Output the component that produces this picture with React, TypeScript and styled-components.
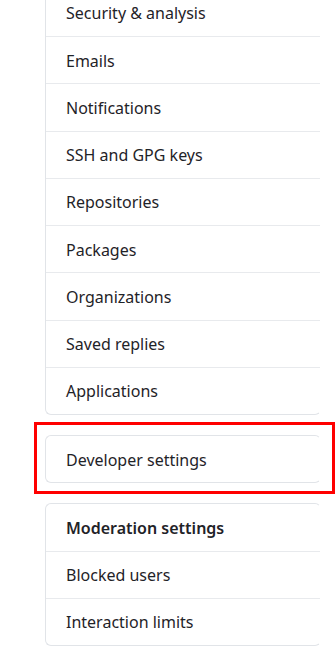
import React from "react";
import styled, { createGlobalStyle } from "styled-components";

const Global = createGlobalStyle`
  html, body { margin: 0; padding: 0; background: #ffffff; }
  body {
    font-family: "Noto Sans", "Open Sans", "Liberation Sans", sans-serif;
    color: #1f2328;
    overflow: hidden;
  }
`;

const Page = styled.div`
  width: 336px;
  height: 660px;
  overflow: hidden;
  padding-left: 45px;
  box-sizing: border-box;
`;

const Card = styled.nav<{ $offsetTop?: number }>`
  width: 276px;
  box-sizing: border-box;
  border: 1px solid #e1e4e8;
  border-right-color: transparent;
  border-radius: 6px;
  margin-top: ${(p) => (p.$offsetTop !== undefined ? `${p.$offsetTop}px` : "0")};
  display: flex;
  flex-direction: column;
`;

const Item = styled.a<{ $heading?: boolean }>`
  display: flex;
  align-items: center;
  height: 46.25px;
  padding: 1px 20px 0;
  box-sizing: border-box;
  font-size: 16px;
  font-weight: ${(p) => (p.$heading ? 600 : 400)};
  color: #1f2328;
  text-decoration: none;
  & + & {
    border-top: 1px solid #e8eaed;
    height: 47.25px;
  }
`;

const Highlight = styled.div`
  width: 301px;
  box-sizing: border-box;
  margin: 7px 0 9px -11px;
  padding: 10px 11px 8px 8px;
  border: 3px solid #ff0000;
`;

const mainItems = [
  "Security & analysis",
  "Emails",
  "Notifications",
  "SSH and GPG keys",
  "Repositories",
  "Packages",
  "Organizations",
  "Saved replies",
  "Applications",
];

export default function App() {
  return (
    <>
      <Global />
      <Page>
        <Card $offsetTop={-11.25}>
          {mainItems.map((t) => (
            <Item key={t}>{t}</Item>
          ))}
        </Card>
        <Highlight>
          <Card>
            <Item>Developer settings</Item>
          </Card>
        </Highlight>
        <Card>
          <Item $heading>Moderation settings</Item>
          <Item>Blocked users</Item>
          <Item>Interaction limits</Item>
        </Card>
      </Page>
    </>
  );
}
